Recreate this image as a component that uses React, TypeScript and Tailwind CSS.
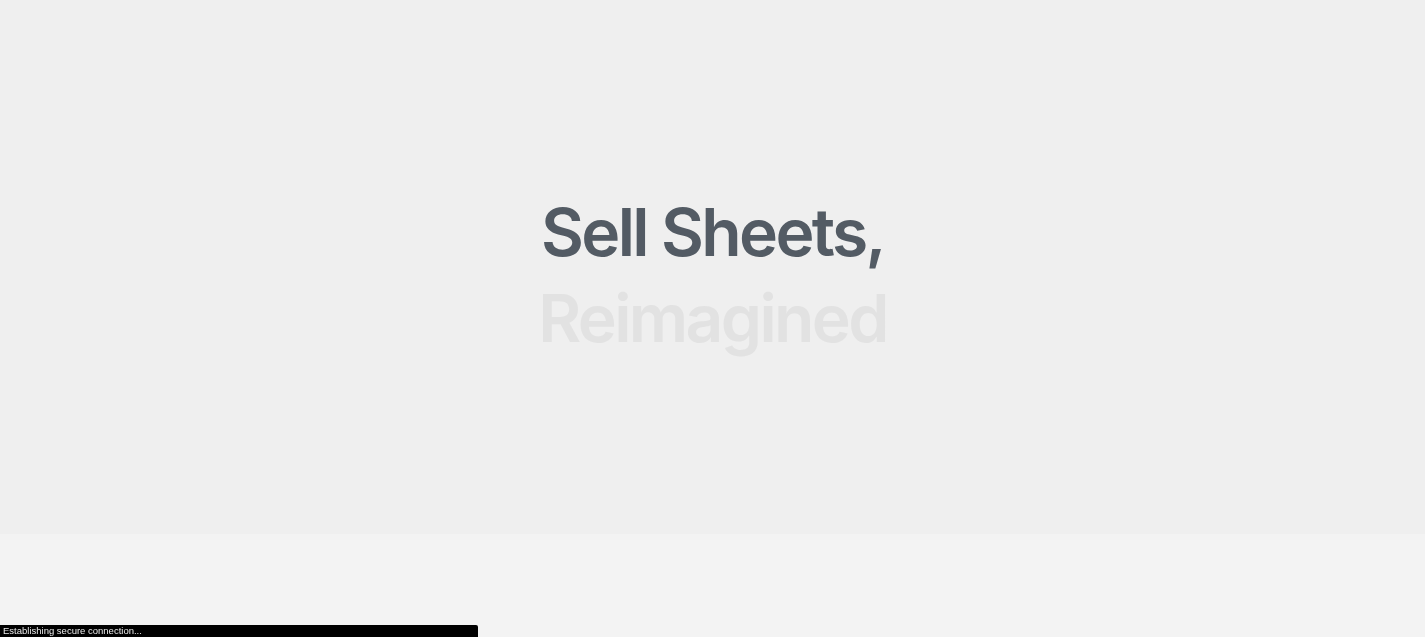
export default function App() {
  return (
    <div className="relative h-[637px] w-full overflow-hidden bg-[#f3f3f3] font-['Inter',sans-serif]">
      {/* hero */}
      <section className="flex h-[534px] flex-col items-center justify-center bg-[#efefef] pt-[16px]">
        <h1 className="text-center text-[66px] font-semibold leading-[86px] tracking-[-0.04em]">
          <span className="block text-[#535b64]">Sell Sheets,</span>
          <span className="block text-[#e2e2e2]">Reimagined</span>
        </h1>
      </section>

      {/* lower area */}
      <section className="h-[103px] bg-[#f3f3f3]" />

      {/* status bar */}
      <div className="fixed bottom-0 left-0 flex h-[12px] w-[478px] items-center rounded-tr-[2px] bg-black px-[3px] font-['Liberation_Sans',sans-serif] text-[9.5px] leading-none text-[#e8e8e8]">
        Establishing secure connection...
      </div>
    </div>
  );
}
